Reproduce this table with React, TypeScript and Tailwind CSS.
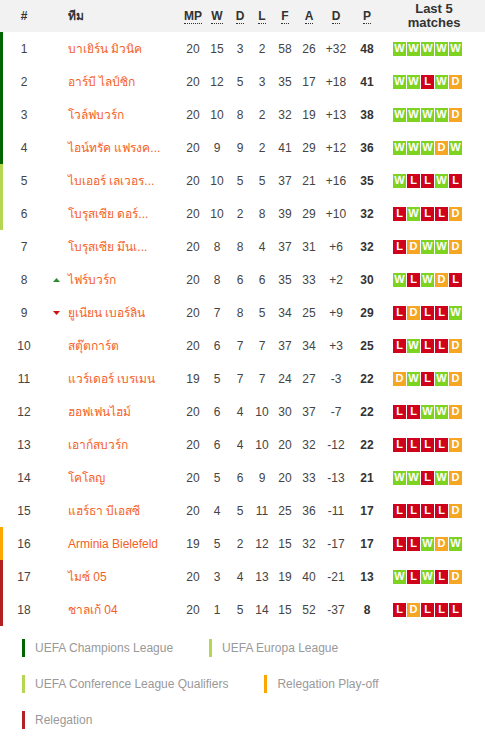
import React from 'react';

type Row = {
  pos: number;
  team: string;
  mp: number;
  w: number;
  d: number;
  l: number;
  f: number;
  a: number;
  gd: string;
  pts: number;
  form: string;
  bar: string;
  move?: 'up' | 'down';
};

const rows: Row[] = [
  { pos: 1, team: 'บาเยิร์น มิวนิค', mp: 20, w: 15, d: 3, l: 2, f: 58, a: 26, gd: '+32', pts: 48, form: 'WWWWW', bar: 'border-[#006400]' },
  { pos: 2, team: 'อาร์บี ไลป์ซิก', mp: 20, w: 12, d: 5, l: 3, f: 35, a: 17, gd: '+18', pts: 41, form: 'WWLWD', bar: 'border-[#006400]' },
  { pos: 3, team: 'โวล์ฟบวร์ก', mp: 20, w: 10, d: 8, l: 2, f: 32, a: 19, gd: '+13', pts: 38, form: 'WWWWD', bar: 'border-[#006400]' },
  { pos: 4, team: 'ไอน์ทรัค แฟรงค...', mp: 20, w: 9, d: 9, l: 2, f: 41, a: 29, gd: '+12', pts: 36, form: 'WWWDW', bar: 'border-[#006400]' },
  { pos: 5, team: 'ไบเออร์ เลเวอร...', mp: 20, w: 10, d: 5, l: 5, f: 37, a: 21, gd: '+16', pts: 35, form: 'WLLWL', bar: 'border-[#b5d652]' },
  { pos: 6, team: 'โบรุสเซีย ดอร์...', mp: 20, w: 10, d: 2, l: 8, f: 39, a: 29, gd: '+10', pts: 32, form: 'LWLLD', bar: 'border-[#b5d652]' },
  { pos: 7, team: 'โบรุสเซีย มึนเ...', mp: 20, w: 8, d: 8, l: 4, f: 37, a: 31, gd: '+6', pts: 32, form: 'LDWWD', bar: 'border-transparent' },
  { pos: 8, team: 'ไฟร์บวร์ก', mp: 20, w: 8, d: 6, l: 6, f: 35, a: 33, gd: '+2', pts: 30, form: 'WLWDL', bar: 'border-transparent', move: 'up' },
  { pos: 9, team: 'ยูเนียน เบอร์ลิน', mp: 20, w: 7, d: 8, l: 5, f: 34, a: 25, gd: '+9', pts: 29, form: 'LDLLW', bar: 'border-transparent', move: 'down' },
  { pos: 10, team: 'สตุ๊ตการ์ต', mp: 20, w: 6, d: 7, l: 7, f: 37, a: 34, gd: '+3', pts: 25, form: 'LWLLD', bar: 'border-transparent' },
  { pos: 11, team: 'แวร์เดอร์ เบรเมน', mp: 19, w: 5, d: 7, l: 7, f: 24, a: 27, gd: '-3', pts: 22, form: 'DWLWD', bar: 'border-transparent' },
  { pos: 12, team: 'ฮอฟเฟนไฮม์', mp: 20, w: 6, d: 4, l: 10, f: 30, a: 37, gd: '-7', pts: 22, form: 'LLWWD', bar: 'border-transparent' },
  { pos: 13, team: 'เอาก์สบวร์ก', mp: 20, w: 6, d: 4, l: 10, f: 20, a: 32, gd: '-12', pts: 22, form: 'LLLLD', bar: 'border-transparent' },
  { pos: 14, team: 'โคโลญ', mp: 20, w: 5, d: 6, l: 9, f: 20, a: 33, gd: '-13', pts: 21, form: 'WWLWD', bar: 'border-transparent' },
  { pos: 15, team: 'แฮร์ธา บีเอสซี', mp: 20, w: 4, d: 5, l: 11, f: 25, a: 36, gd: '-11', pts: 17, form: 'LLLLD', bar: 'border-transparent' },
  { pos: 16, team: 'Arminia Bielefeld', mp: 19, w: 5, d: 2, l: 12, f: 15, a: 32, gd: '-17', pts: 17, form: 'LLWDW', bar: 'border-[#ffa500]' },
  { pos: 17, team: 'ไมซ์ 05', mp: 20, w: 3, d: 4, l: 13, f: 19, a: 40, gd: '-21', pts: 13, form: 'WLWLD', bar: 'border-[#b22222]' },
  { pos: 18, team: 'ชาลเก้ 04', mp: 20, w: 1, d: 5, l: 14, f: 15, a: 52, gd: '-37', pts: 8, form: 'LDLLL', bar: 'border-[#b22222]' },
];

const badgeColor: Record<string, string> = {
  W: 'bg-[#7ed321]',
  L: 'bg-[#d0021b]',
  D: 'bg-[#f5a623]',
};

const legend = [
  { label: 'UEFA Champions League', color: 'bg-[#006400]' },
  { label: 'UEFA Europa League', color: 'bg-[#b5d652]' },
  { label: 'UEFA Conference League Qualifiers', color: 'bg-[#b5d652]' },
  { label: 'Relegation Play-off', color: 'bg-[#ffa500]' },
  { label: 'Relegation', color: 'bg-[#b22222]' },
];

const Abbr = ({ children }: { children: React.ReactNode }) => (
  <span className="border-b border-dotted border-[#333] leading-[13px]">{children}</span>
);

export default function App() {
  return (
    <div className="w-[485px] bg-white text-[12px] text-[#444]" style={{ fontFamily: '"Liberation Sans", Arial, sans-serif' }}>
      {/* header */}
      <div className="flex h-[32px] items-center bg-[#f2f2f2] pl-[3px] font-bold text-[#333]">
        <div className="w-[42px] text-center">#</div>
        <div className="w-[136px] pl-[23px]">ทีม</div>
        <div className="w-[24px] text-center"><Abbr>MP</Abbr></div>
        <div className="w-[24px] text-center"><Abbr>W</Abbr></div>
        <div className="w-[22px] text-center"><Abbr>D</Abbr></div>
        <div className="w-[22px] text-center"><Abbr>L</Abbr></div>
        <div className="w-[24px] text-center"><Abbr>F</Abbr></div>
        <div className="w-[24px] text-center"><Abbr>A</Abbr></div>
        <div className="w-[30px] text-center"><Abbr>D</Abbr></div>
        <div className="w-[32px] text-center"><Abbr>P</Abbr></div>
        <div className="w-[102px] text-center text-[13px] leading-[14px]">Last 5<br />matches</div>
      </div>

      {/* rows */}
      {rows.map((r) => (
        <div key={r.pos} className={`flex h-[33px] items-center border-l-[3px] ${r.bar}`}>
          <div className="w-[42px] text-center">{r.pos}</div>
          <div className="flex w-[136px] items-center">
            <div className="flex w-[23px] justify-center">
              {r.move === 'up' && (
                <svg width="7" height="4" viewBox="0 0 7 4"><polygon points="3.5,0 7,4 0,4" fill="#2e8b2e" /></svg>
              )}
              {r.move === 'down' && (
                <svg width="7" height="4" viewBox="0 0 7 4"><polygon points="0,0 7,0 3.5,4" fill="#cc1111" /></svg>
              )}
            </div>
            <span className="whitespace-nowrap text-[#f4611f]">{r.team}</span>
          </div>
          <div className="w-[24px] text-center">{r.mp}</div>
          <div className="w-[24px] text-center">{r.w}</div>
          <div className="w-[22px] text-center">{r.d}</div>
          <div className="w-[22px] text-center">{r.l}</div>
          <div className="w-[24px] text-center">{r.f}</div>
          <div className="w-[24px] text-center">{r.a}</div>
          <div className="w-[30px] text-center">{r.gd}</div>
          <div className="w-[32px] text-center font-bold text-[#333]">{r.pts}</div>
          <div className="flex w-[102px] gap-px pl-[10px]">
            {r.form.split('').map((c, i) => (
              <span
                key={i}
                className={`flex h-[14px] w-[13px] items-center justify-center text-[11px] font-bold leading-none text-white ${badgeColor[c]}`}
              >
                {c}
              </span>
            ))}
          </div>
        </div>
      ))}

      {/* legend */}
      <div className="flex flex-wrap pl-[22px] pt-[4px] text-[12px] text-[#999]">
        {legend.map((l) => (
          <div key={l.label} className="mr-[36px] flex h-[36px] items-center">
            <span className={`mr-[10px] h-[18px] w-[3px] ${l.color}`} />
            <span>{l.label}</span>
          </div>
        ))}
      </div>
    </div>
  );
}
